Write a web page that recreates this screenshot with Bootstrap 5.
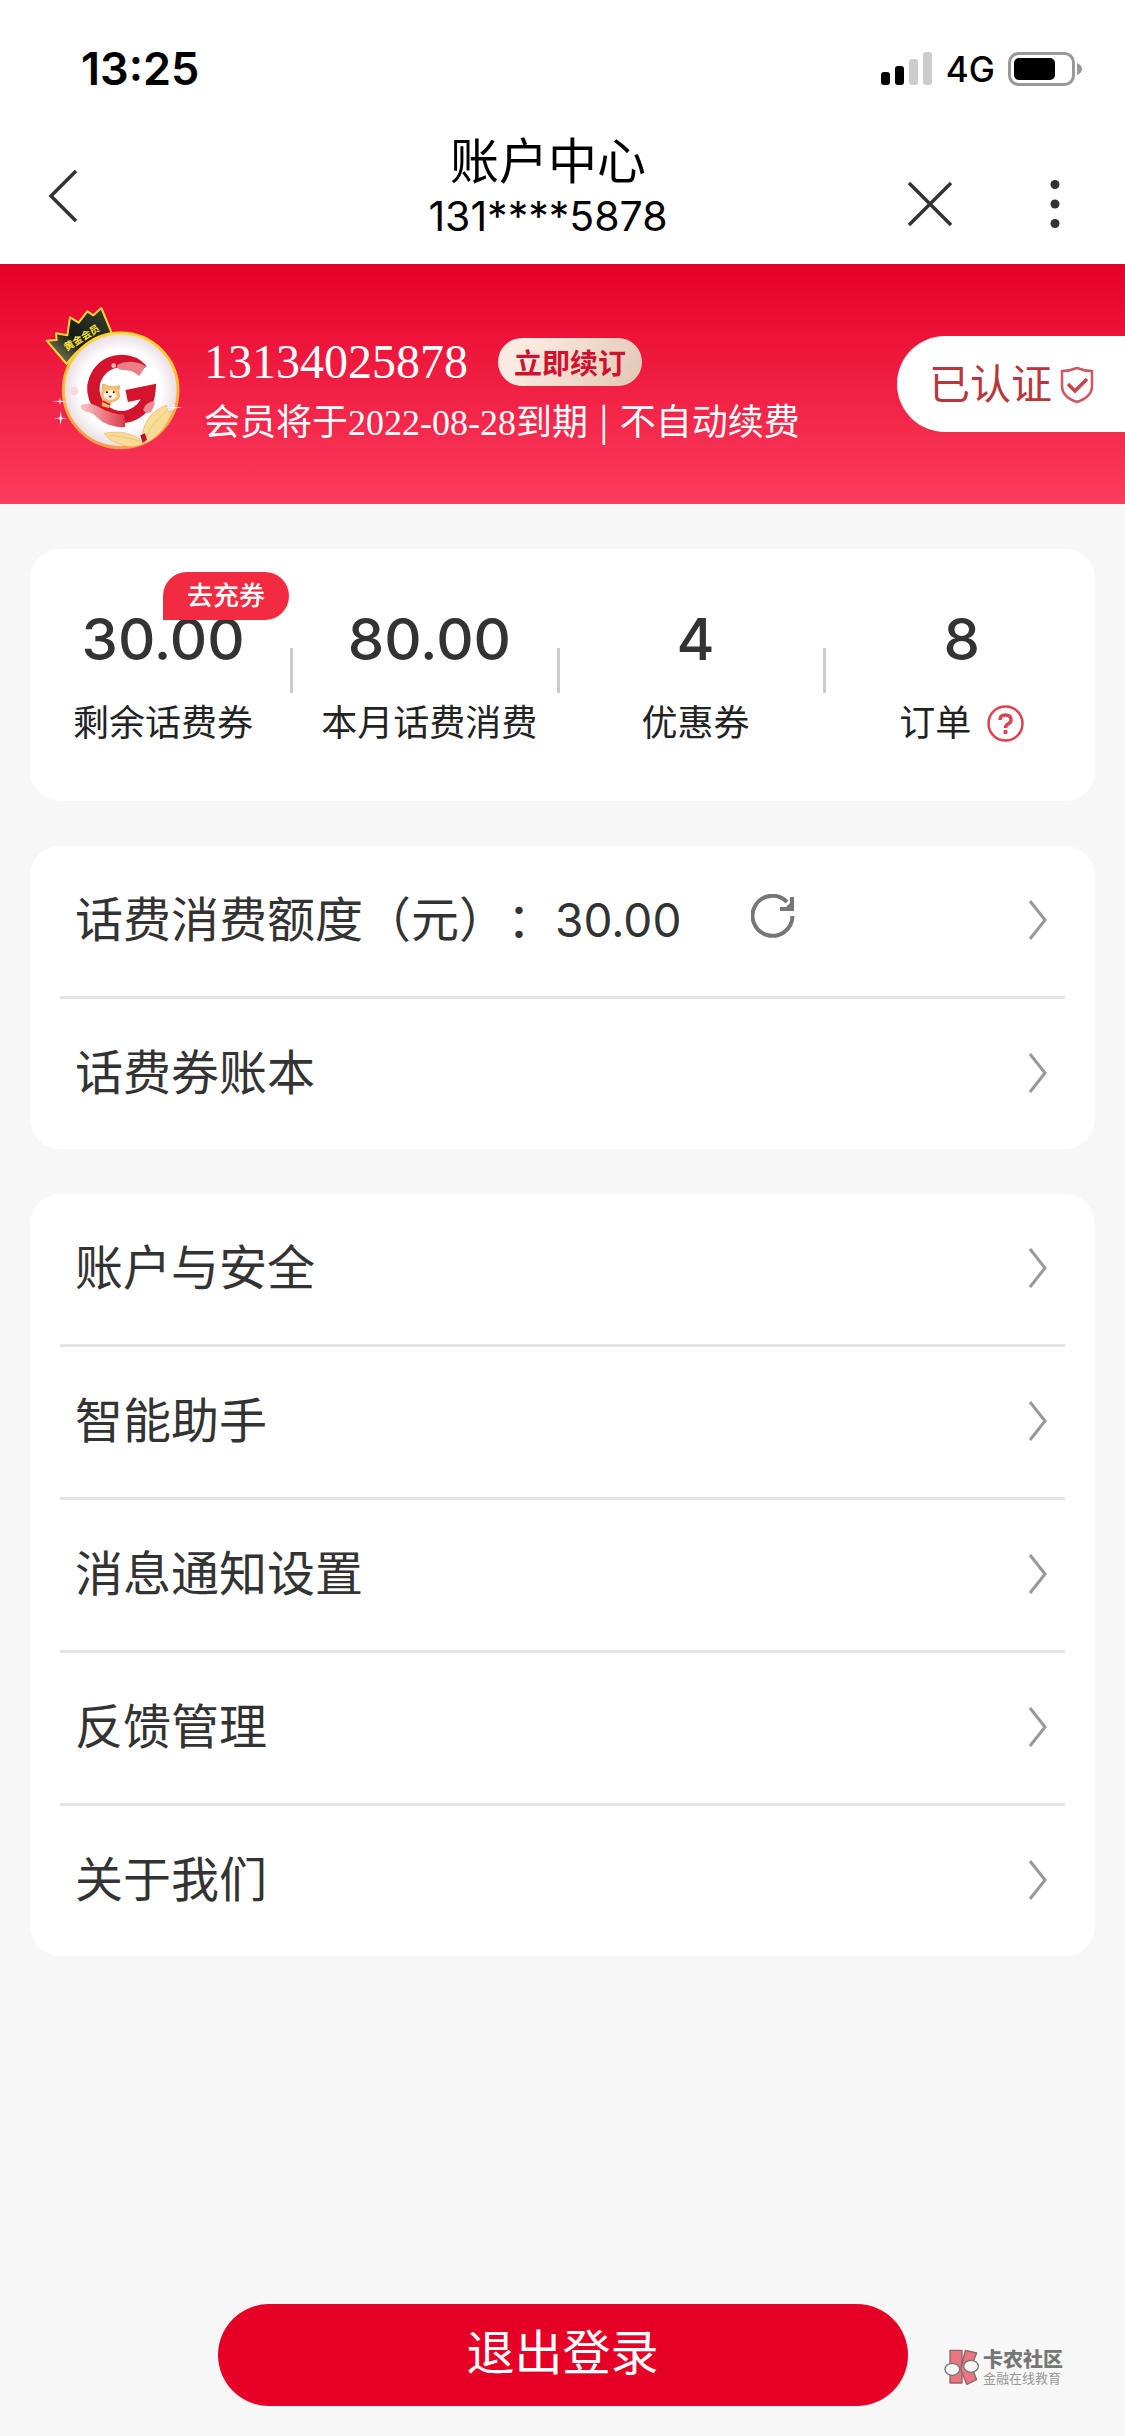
<!DOCTYPE html>
<html lang="zh-CN">
<head>
<meta charset="utf-8">
<meta name="viewport" content="width=device-width, initial-scale=1">
<title>账户中心</title>
<link href="https://cdn.jsdelivr.net/npm/bootstrap@5.3.0/dist/css/bootstrap.min.css" rel="stylesheet">
<style>
body{background:#f7f7f7;color:#333;font-family:Inter,"Noto Sans CJK SC",sans-serif;min-height:100vh}
svg{display:block;flex-shrink:0}
.status-bar{height:120px;padding:18px 43px 0 81px;color:#000}
.clock{font-size:45px;font-weight:600;line-height:56px}
.network-group{gap:13px}
.network{font-size:35px;font-weight:500;line-height:56px}
.title-bar{height:144px;color:#000}
.side-start{width:188px;padding:50px 0 0 46px}
.side-end{width:217px;padding:60px 64px 0 0}
.page-title{font-size:49px;line-height:60px;margin:12px 0 0;font-weight:400}
.page-sub{font-size:41px;line-height:48px}
.icon-btn{background:none;border:0;padding:0;color:#333}
.member{height:240px;background:linear-gradient(#e60028,#fb3d5e);color:#fff;padding:39px 0 0 40px}
.member-info{padding:35px 0 0 20px;font-family:"Liberation Serif","Noto Sans CJK SC",serif}
.phone-row{gap:30px;margin-bottom:6px}
.phone{font-size:48px;line-height:48px}
.expiry{font-size:36px;line-height:54px}
.bar-sep{font-family:"Noto Sans CJK SC",sans-serif;padding:0 3px}
.renew{height:48px;width:144px;border:0;border-radius:24px;background:linear-gradient(120deg,#faeadf 20%,#e3c6b3);color:#d0112f;font:700 28px/44px "Noto Sans CJK SC",sans-serif;padding:0}
.verified{margin-top:33px;height:96px;padding:2px 31px 0 32px;border-radius:48px 0 0 48px;background:#fff;color:#b9373c;font-size:41px;text-decoration:none}
.content-area{padding:45px 30px;gap:45px}
.panel{background:#fff;border-radius:30px}
.stats{height:252px;padding-top:60px}
.stat{position:relative}
.stat + .stat::before{content:"";position:absolute;left:-6px;top:39px;width:3px;height:45px;background:#ccc}
.figure-num{font-size:58px;font-weight:500;line-height:60px}
.figure-label{font-size:36px;line-height:54px;margin-top:27px;color:#222;gap:16px}
.topup{position:absolute;left:133px;top:-37px;width:126px;height:48px;border:0;border-radius:24px 24px 24px 0;background:#f22b40;color:#fff;font-size:26px;font-weight:500;line-height:44px;padding:0}
.menu-item{height:153px;margin:0 30px;padding:0 17px 2px 15px;border-bottom:3px solid #e5e5e5;font-size:48px;line-height:72px;color:#333;text-decoration:none}
.menu-item:last-child{height:150px;border-bottom:0}
.quota{text-spacing-trim:space-all;font-kerning:none;font-feature-settings:"chws" 0,"halt" 0,"palt" 0}
.amount{font-size:46px}
.refresh{margin:0 0 8px 70px}
.page-foot{position:relative;padding:0 0 30px}
.logout{width:690px;max-width:90%;height:102px;border:0;border-radius:51px;background:#e60026;color:#fff;font-size:48px;line-height:72px;padding:0 0 4px}
.source-mark{position:absolute;right:62px;bottom:50px;gap:3px;color:#777}
.mark-name{font-size:20px;line-height:20px;font-weight:900}
.mark-sub{font-size:13px;line-height:16px;color:#999}
</style>
<script src="https://cdn.jsdelivr.net/npm/bootstrap@5.3.0/dist/js/bootstrap.bundle.min.js"></script>
</head>
<body class="d-flex flex-column">
<svg width="0" height="0" class="position-absolute" aria-hidden="true">
  <symbol id="chev" viewBox="0 0 20 42"><path d="M2 2L17 21L2 40" fill="none" stroke="#999" stroke-width="3"/></symbol>
</svg>

<header class="bg-white">
  <div class="status-bar d-flex align-items-center justify-content-between">
    <span class="clock">13:25</span>
    <div class="network-group d-flex align-items-center">
      <svg width="52" height="34" viewBox="0 0 52 34"><rect x="0" y="20" width="9" height="13" rx="3"/><rect x="14" y="14" width="9" height="19" rx="3"/><g fill="#ccc"><rect x="28" y="7" width="9" height="26" rx="3"/><rect x="42" y="0" width="9" height="33" rx="3"/></g></svg>
      <span class="network">4G</span>
      <svg width="74" height="36" viewBox="0 0 74 36"><rect x="1.500" y="2.500" width="64" height="31" rx="9" fill="none" stroke="#999" stroke-width="3"/><rect x="6" y="7" width="41" height="22" rx="5"/><path d="M69 12q5 2 5 6t-5 6z" fill="#999"/></svg>
    </div>
  </div>
  <nav class="title-bar d-flex">
    <div class="side-start"><button class="icon-btn" type="button" aria-label="返回"><svg width="32" height="54" viewBox="0 0 32 54"><path d="M30 1L5 26L30 51" fill="none" stroke="currentColor" stroke-width="3.500"/></svg></button></div>
    <div class="flex-grow-1 text-center">
      <h1 class="page-title">账户中心</h1>
      <div class="page-sub">131****5878</div>
    </div>
    <div class="side-end d-flex align-items-start justify-content-between">
      <button class="icon-btn" type="button" aria-label="关闭"><svg width="44" height="48" viewBox="0 0 44 48"><path d="M1 3L43 45M43 3L1 45" fill="none" stroke="currentColor" stroke-width="3.500"/></svg></button>
      <button class="icon-btn" type="button" aria-label="更多"><svg width="12" height="52" viewBox="0 0 12 52"><g fill="currentColor"><circle cx="6" cy="4.500" r="4.500"/><circle cx="6" cy="24" r="4.500"/><circle cx="6" cy="43.500" r="4.500"/></g></svg></button>
    </div>
  </nav>
</header>

<section class="member d-flex align-items-start">
  <svg width="144" height="149" viewBox="30 39 432 447" aria-label="黄金会员">
    <defs>
      <linearGradient id="ring" x1="0" y1="0" x2="0" y2="1"><stop offset="0" stop-color="#ffd62e"/><stop offset="1" stop-color="#f99a4c"/></linearGradient>
      <radialGradient id="disc"><stop offset=".7" stop-color="#fff"/><stop offset="1" stop-color="#e9dbe3"/></radialGradient>
      <linearGradient id="crown" x1="0" y1="1" x2="1" y2="0"><stop offset="0" stop-color="#9a9370"/><stop offset=".45" stop-color="#151a12"/><stop offset="1" stop-color="#3d4430"/></linearGradient>
      <linearGradient id="blush" x1="0" y1="0" x2="1" y2="0"><stop offset="0" stop-color="#fbc6c6"/><stop offset="1" stop-color="#dd3a48"/></linearGradient>
    </defs>
    <path d="M110 222L50 152L80 150L78 130L112 136L120 82L146 98L172 64L190 76L214 54L247 134Q160 150 110 222Z" fill="url(#crown)" stroke="#f7d63c" stroke-width="6" stroke-linejoin="round"/>
    <circle cx="272" cy="301" r="172" fill="url(#disc)" stroke="url(#ring)" stroke-width="9"/>
    <text x="0" y="0" transform="translate(110 184) rotate(-32)" font-size="30" font-weight="700" fill="#f7e23c">黄金会员</text>
    <path d="M336 240A84 84 0 1 0 358 304L290 318" fill="none" stroke="#d3142d" stroke-width="37"/>
    <path d="M262 224Q300 205 347 228L328 258Q305 238 278 240Q258 238 262 224Z" fill="#e98088"/>
    <circle cx="251" cy="227" r="7" fill="#f6b4b4"/>
    <path d="M152 345Q180 335 205 350Q240 372 283 374L286 412Q230 412 200 382Q190 368 170 366Q150 360 152 345Z" fill="url(#blush)"/>
    <path d="M340 358Q345 338 374 332Q374 350 362 366Q344 374 340 358Z" fill="#ef8b91"/>
    <circle cx="132" cy="303" r="13" fill="#f8dcdc"/>
    <g stroke="#e8973f" stroke-width="2" fill="#f9bf77"><path d="M218 330l-2 18 20 5 8-15z"/><path d="M216 302l2-20 18 6 15 2 18-3-3 20q8 12-4 22-18 12-36 2-15-8-10-27z"/></g>
    <ellipse cx="240" cy="315" rx="19" ry="15" fill="#fff3de"/><circle cx="231" cy="307" r="3"/><circle cx="251" cy="307" r="3"/><path d="M235 317q6 12 11 0z" fill="#c7202f"/><path d="M218 334l22 10" stroke="#d3142d" stroke-width="5"/>
    <g fill="#f8dc96" stroke="#e9b765" stroke-width="2"><path d="M335 455Q338 370 410 346Q412 375 424 362Q410 425 350 458Z"/><path d="M338 456Q295 415 222 430Q235 450 262 460Q300 478 338 462Z"/><path d="M346 446Q365 400 408 365M330 454Q290 440 235 436" fill="none"/></g>
    <path d="M331 436l14-6 6 20-13 8z" fill="#b8152c"/>
    <g fill="#fff"><path d="M66 334l22-2 2-10 2 10 26 2-26 2-2 10-2-10z"/><path d="M72 385l17-2 3-20 3 20 17 2-17 2-3 18-3-18z"/><path d="M405 353l24-2 2-9 2 9 26 2-26 2-2 8-2-8z"/></g>
  </svg>
  <div class="member-info flex-grow-1">
    <div class="phone-row d-flex align-items-center">
      <span class="phone">13134025878</span>
      <button class="renew" type="button">立即续订</button>
    </div>
    <div class="expiry">会员将于2022-08-28到期<span class="bar-sep"> | </span>不自动续费</div>
  </div>
  <a class="verified d-flex align-items-center" href="#">
    <span>已认证</span>
    <svg class="ms-2" width="34" height="38" viewBox="0 0 34 38"><path d="M17 2Q24 5 32 5V20Q32 31 17 36Q2 31 2 20V5Q10 5 17 2Z" fill="none" stroke="#cf5960" stroke-width="2.500"/><path d="M8 18L15 25L27 13" fill="none" stroke="#c8434a" stroke-width="3.500"/></svg>
  </a>
</section>

<main class="content-area d-flex flex-column flex-grow-1">
  <section class="panel stats row g-0 text-center">
    <div class="stat col-3"><div class="figure-num">30.00</div><div class="figure-label">剩余话费券</div><button class="topup" type="button">去充券</button></div>
    <div class="stat col-3"><div class="figure-num">80.00</div><div class="figure-label">本月话费消费</div></div>
    <div class="stat col-3"><div class="figure-num">4</div><div class="figure-label">优惠券</div></div>
    <div class="stat col-3"><div class="figure-num">8</div><div class="figure-label d-flex align-items-center justify-content-center">订单
      <svg width="37" height="37" viewBox="0 0 37 37"><circle cx="18.500" cy="18.500" r="17" fill="none" stroke="#e2404f" stroke-width="2.500"/><path d="M13 15Q13 10 18.500 10T24 15Q24 17.500 21 19Q18.500 20.500 18.500 23" fill="none" stroke="#e2404f" stroke-width="3.500"/><circle cx="18.500" cy="27" r="2.200" fill="#e2404f"/></svg></div></div>
  </section>

  <section class="panel">
    <div class="menu-item d-flex align-items-center">
      <span class="quota">话费消费额度（元）：</span><span class="amount">30.00</span>
      <button class="icon-btn refresh" type="button" aria-label="刷新"><svg width="44" height="44" viewBox="0 0 44 44"><path d="M41.500 22A20 20 0 1 1 36 8" fill="none" stroke="#777" stroke-width="4"/><path d="M43 3V17H29V13H35L39 9V3Z" fill="#777"/></svg></button>
      <svg class="ms-auto" width="20" height="42"><use href="#chev"/></svg>
    </div>
    <a class="menu-item d-flex align-items-center justify-content-between" href="#">话费券账本<svg width="20" height="42"><use href="#chev"/></svg></a>
  </section>

  <section class="panel">
    <a class="menu-item d-flex align-items-center justify-content-between" href="#">账户与安全<svg width="20" height="42"><use href="#chev"/></svg></a>
    <a class="menu-item d-flex align-items-center justify-content-between" href="#">智能助手<svg width="20" height="42"><use href="#chev"/></svg></a>
    <a class="menu-item d-flex align-items-center justify-content-between" href="#">消息通知设置<svg width="20" height="42"><use href="#chev"/></svg></a>
    <a class="menu-item d-flex align-items-center justify-content-between" href="#">反馈管理<svg width="20" height="42"><use href="#chev"/></svg></a>
    <a class="menu-item d-flex align-items-center justify-content-between" href="#">关于我们<svg width="20" height="42"><use href="#chev"/></svg></a>
  </section>
</main>

<footer class="page-foot text-center">
  <button class="logout" type="button">退出登录</button>
  <div class="source-mark d-flex align-items-center text-start">
    <svg width="36" height="37" viewBox="0 0 108 111"><g fill="#ea7680" stroke="#8a6668" stroke-width="4" stroke-linejoin="round"><path d="M18 4H54V102H18Z"/><path d="M64 4L98 12L82 52L98 92L68 106L50 60Z"/></g><g fill="#f7f7f7" stroke="#777" stroke-width="4"><ellipse cx="25" cy="61" rx="22" ry="18"/><ellipse cx="81" cy="52" rx="22" ry="18"/></g></svg>
    <div><div class="mark-name">卡农社区</div><div class="mark-sub">金融在线教育</div></div>
  </div>
</footer>
</body>
</html>
